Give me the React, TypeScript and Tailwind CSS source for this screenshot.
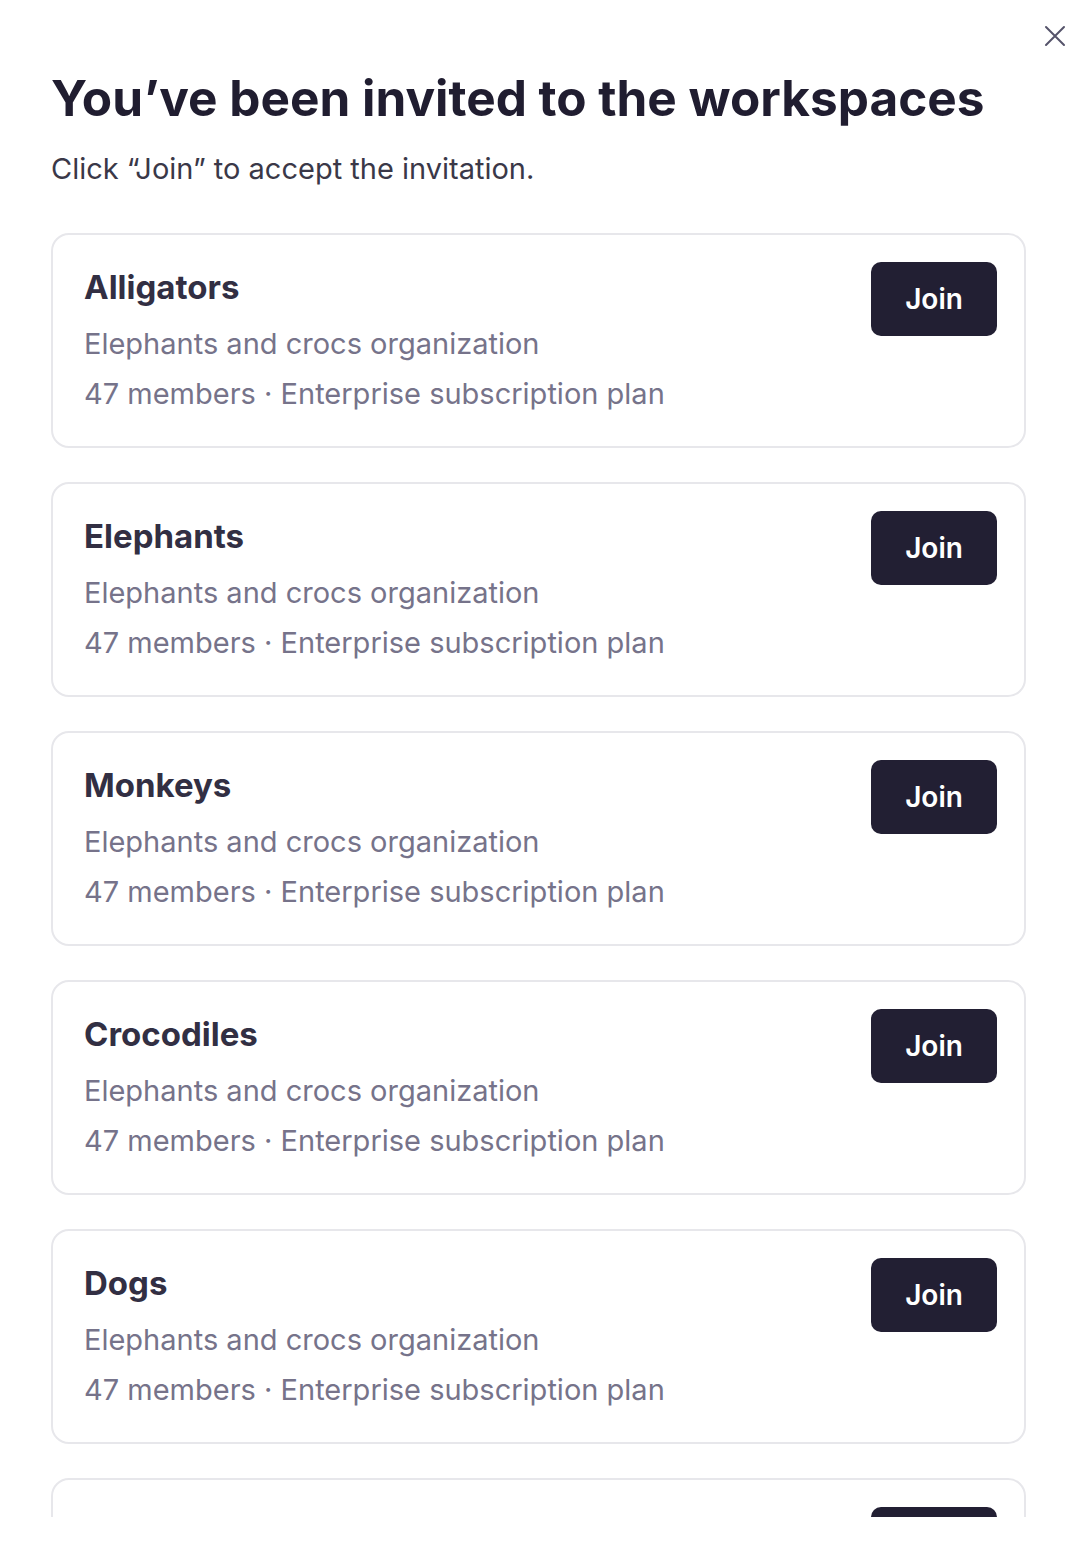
import React from 'react';

const workspaces = ['Alligators', 'Elephants', 'Monkeys', 'Crocodiles', 'Dogs', 'Cats'];

const WorkspaceCard: React.FC<{ name: string }> = ({ name }) => (
  <div className="flex shrink-0 items-start justify-between rounded-[18px] border-2 border-[#e7e7eb] bg-white pl-[31px] pr-[27px] pt-[27px] pb-[32px]">
    <div className="pt-[5px]">
      <h2 className="text-[33px] font-bold leading-[40px] text-[#322f43]">{name}</h2>
      <p className="mt-[17px] text-[29px] leading-[40px] text-[#76738a]">Elephants and crocs organization</p>
      <p className="mt-[10px] text-[29px] leading-[40px] text-[#76738a]">47 members · Enterprise subscription plan</p>
    </div>
    <button className="h-[74px] w-[126px] rounded-[10px] bg-[#221f33] text-[28px] font-semibold text-white">
      Join
    </button>
  </div>
);

export default function App() {
  return (
    <div className="relative h-[1554px] w-full bg-white" style={{ fontFamily: 'Inter, "Noto Sans", sans-serif' }}>
      <button className="absolute left-[1044px] top-[25px] text-[#55536a]">
        <svg width="22" height="22" viewBox="0 0 22 22" fill="none" stroke="currentColor" strokeWidth="2" strokeLinecap="round">
          <path d="M2 2L20 20M20 2L2 20" />
        </svg>
      </button>
      <div className="pl-[51px] pr-[40px] pt-[70px]">
        <h1 className="text-[49.5px] font-bold leading-[56px] text-[#201d30]">
          You’ve been invited to the workspaces
        </h1>
        <p className="mt-[25px] text-[29px] leading-[36px] text-[#3a3848]">Click “Join” to accept the invitation.</p>
        <div className="mt-[46px] flex h-[1284px] flex-col gap-[34px] overflow-hidden">
          {workspaces.map((w) => (
            <WorkspaceCard key={w} name={w} />
          ))}
        </div>
      </div>
    </div>
  );
}
